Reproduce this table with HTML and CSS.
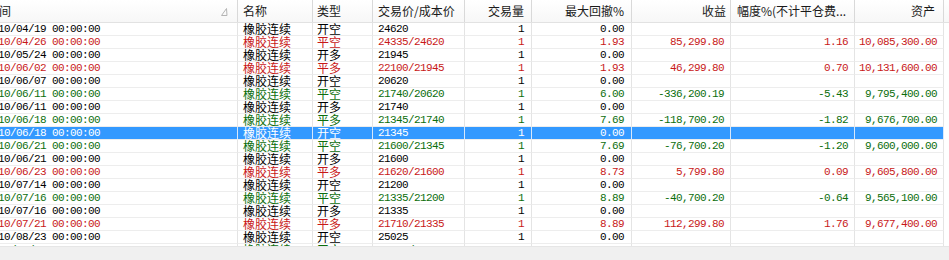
FILE: index.html
```html
<!DOCTYPE html>
<html lang="zh-CN">
<head>
<meta charset="utf-8">
<title>交易记录</title>
<link rel="stylesheet" href="styles.css">
</head>
<body>
<div class="view">
  <div class="grid">
    <div class="hdr">
      <div class="h1"><span>时间</span><svg class="sort" width="7" height="8" viewBox="0 0 7 8"><path d="M0.5 7.5 L5.5 0.5 L6 7.5 Z" fill="none" stroke="#b4b4b4" stroke-width="1"/></svg></div>
      <div class="h2">名称</div>
      <div class="h3">类型</div>
      <div class="h4">交易价/成本价</div>
      <div class="h5">交易量</div>
      <div class="h6">最大回撤%</div>
      <div class="h7">收益</div>
      <div class="h8">幅度%(不计平仓费...</div>
      <div class="h9">资产</div>
      <div class="hf"></div>
    </div>

    <div class="row"><div class="c1 num">2010/04/19 00:00:00</div><div class="c2">橡胶连续</div><div class="c3">开空</div><div class="c4 num">24620</div><div class="c5 num">1</div><div class="c6 num">0.00</div><div class="c7 num"></div><div class="c8 num"></div><div class="c9 num"></div><div class="f"></div></div>
    <div class="row red"><div class="c1 num">2010/04/26 00:00:00</div><div class="c2">橡胶连续</div><div class="c3">平空</div><div class="c4 num">24335/24620</div><div class="c5 num">1</div><div class="c6 num">1.93</div><div class="c7 num">85,299.80</div><div class="c8 num">1.16</div><div class="c9 num">10,085,300.00</div><div class="f"></div></div>
    <div class="row"><div class="c1 num">2010/05/24 00:00:00</div><div class="c2">橡胶连续</div><div class="c3">开多</div><div class="c4 num">21945</div><div class="c5 num">1</div><div class="c6 num">0.00</div><div class="c7 num"></div><div class="c8 num"></div><div class="c9 num"></div><div class="f"></div></div>
    <div class="row red"><div class="c1 num">2010/06/02 00:00:00</div><div class="c2">橡胶连续</div><div class="c3">平多</div><div class="c4 num">22100/21945</div><div class="c5 num">1</div><div class="c6 num">1.93</div><div class="c7 num">46,299.80</div><div class="c8 num">0.70</div><div class="c9 num">10,131,600.00</div><div class="f"></div></div>
    <div class="row"><div class="c1 num">2010/06/07 00:00:00</div><div class="c2">橡胶连续</div><div class="c3">开空</div><div class="c4 num">20620</div><div class="c5 num">1</div><div class="c6 num">0.00</div><div class="c7 num"></div><div class="c8 num"></div><div class="c9 num"></div><div class="f"></div></div>
    <div class="row green"><div class="c1 num">2010/06/11 00:00:00</div><div class="c2">橡胶连续</div><div class="c3">平空</div><div class="c4 num">21740/20620</div><div class="c5 num">1</div><div class="c6 num">6.00</div><div class="c7 num">-336,200.19</div><div class="c8 num">-5.43</div><div class="c9 num">9,795,400.00</div><div class="f"></div></div>
    <div class="row"><div class="c1 num">2010/06/11 00:00:00</div><div class="c2">橡胶连续</div><div class="c3">开多</div><div class="c4 num">21740</div><div class="c5 num">1</div><div class="c6 num">0.00</div><div class="c7 num"></div><div class="c8 num"></div><div class="c9 num"></div><div class="f"></div></div>
    <div class="row green"><div class="c1 num">2010/06/18 00:00:00</div><div class="c2">橡胶连续</div><div class="c3">平多</div><div class="c4 num">21345/21740</div><div class="c5 num">1</div><div class="c6 num">7.69</div><div class="c7 num">-118,700.20</div><div class="c8 num">-1.82</div><div class="c9 num">9,676,700.00</div><div class="f"></div></div>
    <div class="row sel"><div class="c1 num">2010/06/18 00:00:00</div><div class="c2">橡胶连续</div><div class="c3">开空</div><div class="c4 num">21345</div><div class="c5 num">1</div><div class="c6 num">0.00</div><div class="c7 num"></div><div class="c8 num"></div><div class="c9 num"></div><div class="f"></div></div>
    <div class="row green"><div class="c1 num">2010/06/21 00:00:00</div><div class="c2">橡胶连续</div><div class="c3">平空</div><div class="c4 num">21600/21345</div><div class="c5 num">1</div><div class="c6 num">7.69</div><div class="c7 num">-76,700.20</div><div class="c8 num">-1.20</div><div class="c9 num">9,600,000.00</div><div class="f"></div></div>
    <div class="row"><div class="c1 num">2010/06/21 00:00:00</div><div class="c2">橡胶连续</div><div class="c3">开多</div><div class="c4 num">21600</div><div class="c5 num">1</div><div class="c6 num">0.00</div><div class="c7 num"></div><div class="c8 num"></div><div class="c9 num"></div><div class="f"></div></div>
    <div class="row red"><div class="c1 num">2010/06/23 00:00:00</div><div class="c2">橡胶连续</div><div class="c3">平多</div><div class="c4 num">21620/21600</div><div class="c5 num">1</div><div class="c6 num">8.73</div><div class="c7 num">5,799.80</div><div class="c8 num">0.09</div><div class="c9 num">9,605,800.00</div><div class="f"></div></div>
    <div class="row"><div class="c1 num">2010/07/14 00:00:00</div><div class="c2">橡胶连续</div><div class="c3">开空</div><div class="c4 num">21200</div><div class="c5 num">1</div><div class="c6 num">0.00</div><div class="c7 num"></div><div class="c8 num"></div><div class="c9 num"></div><div class="f"></div></div>
    <div class="row green"><div class="c1 num">2010/07/16 00:00:00</div><div class="c2">橡胶连续</div><div class="c3">平空</div><div class="c4 num">21335/21200</div><div class="c5 num">1</div><div class="c6 num">8.89</div><div class="c7 num">-40,700.20</div><div class="c8 num">-0.64</div><div class="c9 num">9,565,100.00</div><div class="f"></div></div>
    <div class="row"><div class="c1 num">2010/07/16 00:00:00</div><div class="c2">橡胶连续</div><div class="c3">开多</div><div class="c4 num">21335</div><div class="c5 num">1</div><div class="c6 num">0.00</div><div class="c7 num"></div><div class="c8 num"></div><div class="c9 num"></div><div class="f"></div></div>
    <div class="row red"><div class="c1 num">2010/07/21 00:00:00</div><div class="c2">橡胶连续</div><div class="c3">平多</div><div class="c4 num">21710/21335</div><div class="c5 num">1</div><div class="c6 num">8.89</div><div class="c7 num">112,299.80</div><div class="c8 num">1.76</div><div class="c9 num">9,677,400.00</div><div class="f"></div></div>
    <div class="row"><div class="c1 num">2010/08/23 00:00:00</div><div class="c2">橡胶连续</div><div class="c3">开空</div><div class="c4 num">25025</div><div class="c5 num">1</div><div class="c6 num">0.00</div><div class="c7 num"></div><div class="c8 num"></div><div class="c9 num"></div><div class="f"></div></div>
    <div class="row green"><div class="c1 num">2010/08/31 00:00:00</div><div class="c2">橡胶连续</div><div class="c3">平空</div><div class="c4 num">24100/25025</div><div class="c5 num">1</div><div class="c6 num">2.10</div><div class="c7 num">91,499.80</div><div class="c8 num">0.95</div><div class="c9 num">9,768,900.00</div><div class="f"></div></div>
  </div>
  <div class="hscroll"></div>
</div>
</body>
</html>
```
FILE: styles.css
```css
* { box-sizing: border-box; margin: 0; padding: 0; }
html, body { width: 949px; height: 260px; overflow: hidden; background: #fff; }
body { font-family: "Noto Sans CJK SC", "Noto Sans", sans-serif; color: #000; }

.view { display: flex; flex-direction: column; height: 260px; overflow: hidden; }
.grid { height: 246px; flex: none; overflow: hidden; margin-left: -16px; width: 965px; }

.hdr, .row {
  display: grid;
  grid-template-columns: 254px 75px 60px 92px 67px 100px 99px 124px 89px 1fr;
}

.hdr { height: 23px; background: linear-gradient(#ffffff, #f7f7f7); border-bottom: 1px solid #e2e2e2; }
.hdr > div {
  border-right: 1px solid #d9d9d9;
  font-size: 12px; line-height: 22px; height: 22px;
  color: #1a1a1a; white-space: nowrap; overflow: hidden;
}
.hdr > .hf { border-right: none; }
.h1 { display: flex; justify-content: space-between; align-items: center; padding: 0 9px 0 3px; }
.sort { display: block; margin-top: 1px; }
.h2 { padding-left: 5px; }
.h3 { padding-left: 4px; }
.h4 { padding-left: 5px; }
.h5 { text-align: right; padding-right: 7px; }
.h6 { text-align: right; padding-right: 7px; }
.h7 { text-align: right; padding-right: 4px; }
.h8 { padding-left: 6px; }
.h9 { text-align: right; padding-right: 8px; }

.row { height: 13px; }
.row > div {
  height: 13px; line-height: 12px;
  border-right: 1px solid #e4e4e4; border-bottom: 1px solid #ededed;
  font-size: 12px; white-space: nowrap; overflow: hidden;
}
.row > .f { border: none; }

.num { font-family: "Liberation Mono", "DejaVu Sans Mono", monospace; letter-spacing: -0.6px; }
.row > .num { font-size: 11px; }

.c1 { padding-left: 2px; }
.c2 { padding-left: 5px; }
.c3 { padding-left: 4px; }
.c4 { padding-left: 5px; }
.c5, .c6 { text-align: right; padding-right: 7px; }
.c7, .c8, .c9 { text-align: right; padding-right: 6px; }

.red { color: #c81818; }
.green { color: #0c6e0c; }
.sel > div:not(.f) { background: #3399ff; color: #fff; border-right-color: #d8e8fb; border-bottom-color: #ededed; }

.hscroll { flex: 1; background: #f0f0f0; border-top: 1px solid #e6e6e6; }
```
